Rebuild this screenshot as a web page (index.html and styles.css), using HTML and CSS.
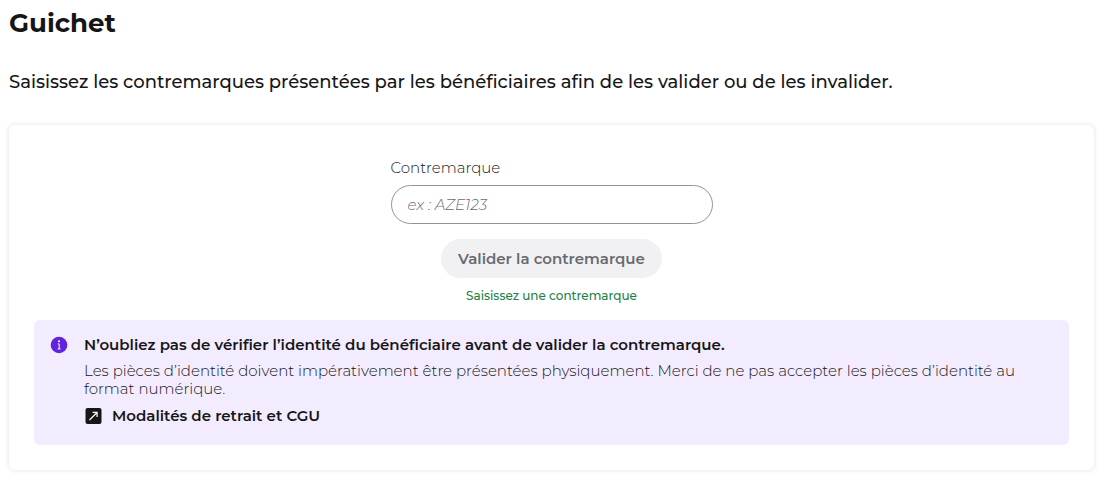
FILE: index.html
```html
<!DOCTYPE html>
<html lang="fr">
<head>
<meta charset="utf-8">
<meta name="viewport" content="width=device-width, initial-scale=1">
<title>Guichet</title>
<link rel="stylesheet" href="styles.css">
</head>
<body>
<main class="page">
  <h1 class="title">Guichet</h1>
  <p class="intro">Saisissez les contremarques présentées par les bénéficiaires afin de les valider ou de les invalider.</p>
  <section class="card">
    <form class="form">
      <label class="label" for="token">Contremarque</label>
      <input class="input" id="token" type="text" placeholder="ex : AZE123">
      <button class="submit" type="submit" disabled>Valider la contremarque</button>
      <p class="message">Saisissez une contremarque</p>
    </form>
    <div class="banner">
      <svg class="icon" viewBox="0 0 18 18" aria-hidden="true">
        <circle cx="9" cy="9" r="8.3" fill="#6123df"/>
        <circle cx="9" cy="5.2" r="1" fill="#fff"/>
        <path d="M7.8 7.9H9.2V12.8M7.7 12.9H10.6" fill="none" stroke="#fff" stroke-width="1"/>
      </svg>
      <div class="banner-body">
        <p class="banner-title">N’oubliez pas de vérifier l’identité du bénéficiaire avant de valider la contremarque.</p>
        <p class="banner-text">Les pièces d’identité doivent impérativement être présentées physiquement. Merci de ne pas accepter les pièces d’identité au format numérique.</p>
        <a class="link" href="#cgu">
          <svg class="icon" viewBox="0 0 18 18" aria-hidden="true">
            <rect x="1.5" y="1" width="16" height="16" rx="2" fill="#161617"/>
            <path d="M5.5 13L12.5 6M8.6 5.4H13.1V9.9" fill="none" stroke="#fff" stroke-width="1.2"/>
          </svg>
          <span>Modalités de retrait et CGU</span>
        </a>
      </div>
    </div>
  </section>
</main>
</body>
</html>
```
FILE: styles.css
```css
* {
  box-sizing: border-box;
}

body {
  margin: 0;
  background: #fff;
  color: #161617;
  font-family: Montserrat, Inter, "Liberation Sans", sans-serif;
  font-size: 15px;
  line-height: 18px;
}

h1,
p {
  margin: 0;
}

.page {
  padding: 7px 19px 10px 9px;
}

.title {
  font-size: 26px;
  line-height: 32px;
  font-weight: 700;
}

.intro {
  margin-top: 32px;
  font-size: 18px;
  line-height: 22px;
  font-weight: 500;
}

.card {
  margin-top: 32px;
  padding: 34px 25px 25px;
  border-radius: 6px;
  box-shadow: 0 0 4px 1px #e9e9f3;
}

.form {
  display: flex;
  flex-direction: column;
  align-items: center;
  width: 322px;
  max-width: 100%;
  margin: 0 auto;
}

.label {
  align-self: flex-start;
  font-weight: 300;
}

.input {
  width: 100%;
  height: 39px;
  margin-top: 8px;
  padding: 0 16px;
  border: 1px solid #90949d;
  border-radius: 20px;
  background: #fff;
  color: #161617;
  font: inherit;
}

.input::placeholder {
  color: #696a6f;
  font-style: italic;
  font-weight: 300;
  opacity: 1;
}

.submit {
  height: 39px;
  margin-top: 15px;
  padding: 0 17px;
  border: 0;
  border-radius: 20px;
  background: #f1f1f4;
  color: #696a6f;
  font: inherit;
  font-weight: 600;
}

.message {
  margin-top: 10px;
  color: #1c8048;
  font-size: 12px;
  line-height: 16px;
  font-weight: 500;
}

.banner {
  display: flex;
  gap: 16px;
  margin-top: 16px;
  padding: 16px 40px 16px 16px;
  border-radius: 6px;
  background: #f3ecff;
}

.icon {
  flex: none;
  width: 18px;
  height: 18px;
}

.banner-title {
  font-weight: 600;
}

.banner-text {
  margin-top: 8px;
  font-weight: 300;
}

.link {
  display: inline-flex;
  align-items: center;
  gap: 10px;
  margin-top: 9px;
  color: inherit;
  font-weight: 600;
  text-decoration: none;
}
```
